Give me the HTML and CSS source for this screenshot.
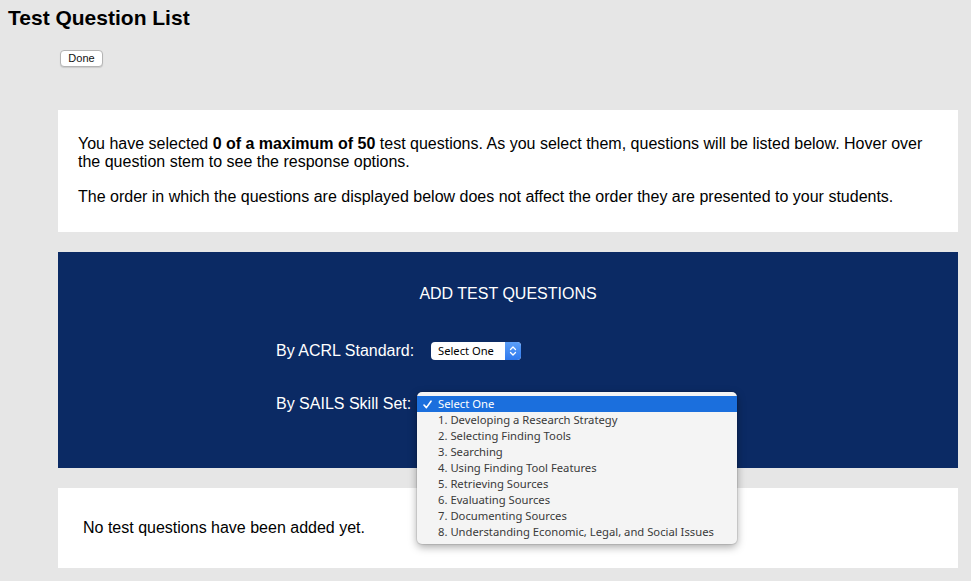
FILE: index.html
```html
<!DOCTYPE html>
<html lang="en">
<head>
<meta charset="utf-8">
<title>Test Question List</title>
<link rel="stylesheet" href="styles.css">
</head>
<body>
<header class="page-head">
  <h1 class="page-title">Test Question List</h1>
  <div class="actions"><button class="btn" type="button">Done</button></div>
</header>
<main class="panels">
  <section class="panel intro">
    <p>You have selected <strong>0 of a maximum of 50</strong> test questions. As you select them, questions will be listed below. Hover over the question stem to see the response options.</p>
    <p>The order in which the questions are displayed below does not affect the order they are presented to your students.</p>
  </section>
  <section class="panel add">
    <h2 class="add-title">ADD TEST QUESTIONS</h2>
    <div class="filters">
      <span class="label">By ACRL Standard:</span>
      <div class="select">
        <span class="select-text">Select One</span>
        <span class="select-arrow"><svg width="8" height="12" viewBox="0 0 8 12"><path d="M1.5 4.5 L4 2 L6.5 4.5 M1.5 7.5 L4 10 L6.5 7.5" fill="none" stroke="#fff" stroke-width="1.3" stroke-linecap="round" stroke-linejoin="round"/></svg></span>
      </div>
      <span class="label">By SAILS Skill Set:</span>
      <div class="select-wrap">
        <div class="select">
          <span class="select-text">Select One</span>
          <span class="select-arrow"></span>
        </div>
        <ul class="popup">
          <li class="opt selected"><span class="check"><svg width="9" height="9" viewBox="0 0 9 9"><path d="M1 5 L3.4 7.6 L8 1.2" fill="none" stroke="#fff" stroke-width="1.6" stroke-linecap="round" stroke-linejoin="round"/></svg></span>Select One</li>
          <li class="opt">1. Developing a Research Strategy</li>
          <li class="opt">2. Selecting Finding Tools</li>
          <li class="opt">3. Searching</li>
          <li class="opt">4. Using Finding Tool Features</li>
          <li class="opt">5. Retrieving Sources</li>
          <li class="opt">6. Evaluating Sources</li>
          <li class="opt">7. Documenting Sources</li>
          <li class="opt">8. Understanding Economic, Legal, and Social Issues</li>
        </ul>
      </div>
    </div>
  </section>
  <section class="panel empty">
    <p>No test questions have been added yet.</p>
  </section>
</main>
</body>
</html>
```
FILE: styles.css
```css
html, body {
  margin: 0;
  padding: 0;
  background: #e6e6e6;
  font-family: "Liberation Sans", Arial, Helvetica, sans-serif;
  color: #000;
}
.page-head {
  padding: 6px 8px 0 8px;
}
.page-title {
  margin: 0;
  font-size: 21px;
  line-height: 24px;
  font-weight: bold;
}
.actions {
  padding: 20px 0 0 52px;
}
.btn {
  display: block;
  width: 43px;
  height: 17px;
  padding: 0;
  margin: 0;
  background: #fff;
  border: 1px solid #b4b4b4;
  border-radius: 4px;
  font-family: "Liberation Sans", Arial, sans-serif;
  font-size: 11px;
  line-height: 15px;
  color: #111;
  box-shadow: 0 1px 1px rgba(0,0,0,0.12);
}
.panels {
  display: flex;
  flex-direction: column;
  gap: 20px;
  width: 900px;
  margin: 43px 0 0 58px;
}
.panel {
  background: #fff;
}
.panel p {
  margin: 0;
  font-size: 16px;
  line-height: 18px;
}
.intro {
  padding: 25px 20px 26px 20px;
  display: flex;
  flex-direction: column;
  gap: 17px;
}
.add {
  background: #0b2a64;
  color: #fff;
  padding: 33px 0 55px 0;
}
.add-title {
  margin: 0;
  text-align: center;
  font-size: 16px;
  line-height: 18px;
  font-weight: normal;
}
.filters {
  display: grid;
  grid-template-columns: 155px auto;
  row-gap: 35px;
  align-items: center;
  padding: 39px 0 0 218px;
}
.label {
  font-size: 16px;
  line-height: 18px;
}
.select-wrap {
  position: relative;
  width: 90px;
  height: 18px;
}
.select {
  display: flex;
  width: 90px;
  height: 18px;
  background: #fff;
  border-radius: 4px;
  overflow: hidden;
  box-sizing: border-box;
}
.select-text {
  flex: 1;
  padding-left: 7px;
  font-family: "Noto Sans", "DejaVu Sans", sans-serif;
  font-size: 11.2px;
  line-height: 18px;
  color: #000;
}
.select-arrow {
  width: 16px;
  display: flex;
  align-items: center;
  justify-content: center;
  background: linear-gradient(#5c9ff8, #2f79ee);
}
.popup {
  position: absolute;
  left: -14px;
  top: -3px;
  width: 320px;
  margin: 0;
  padding: 4px 0;
  list-style: none;
  background: #f4f4f4;
  border-radius: 5px;
  box-shadow: 0 3px 8px rgba(0,0,0,0.35), 0 0 0 1px rgba(0,0,0,0.08);
}
.opt {
  position: relative;
  height: 16px;
  padding-left: 21px;
  font-family: "Noto Sans", "DejaVu Sans", sans-serif;
  font-size: 11.25px;
  line-height: 16px;
  color: #3a3a3a;
  white-space: nowrap;
}
.opt.selected {
  background: #1b6fdd;
  color: #fff;
}
.check {
  position: absolute;
  left: 6px;
  top: 4px;
  width: 9px;
  height: 9px;
  display: flex;
}
.empty {
  padding: 31px 25px 31px 25px;
}
```
